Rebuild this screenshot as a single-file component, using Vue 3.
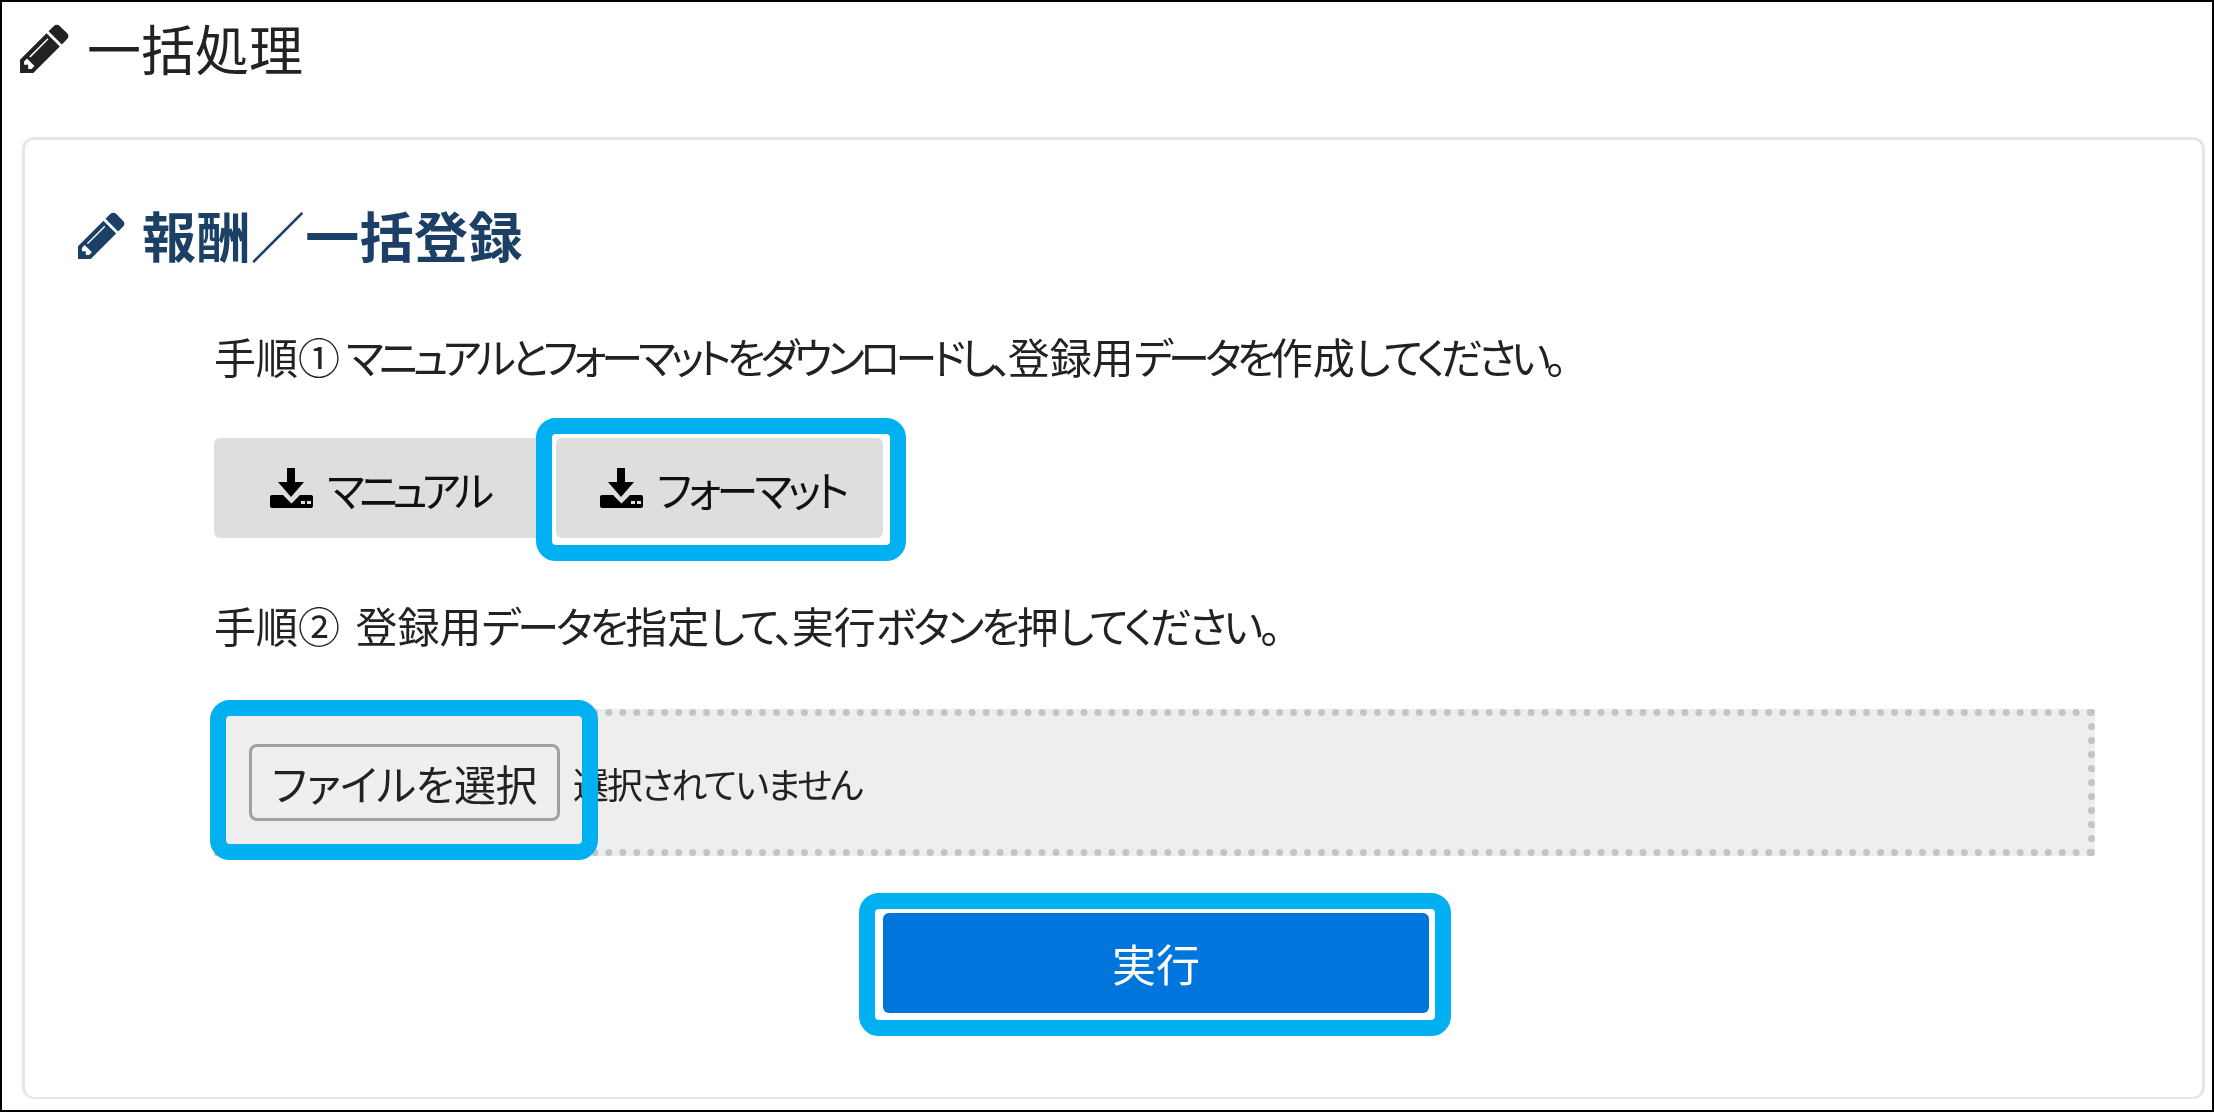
<script setup>
const pencilPath = 'M491 1536l91-91-235-235-91 91v107h128v128h107zm523-928q0-22-22-22-10 0-17 7l-542 542q-7 7-7 17 0 22 22 22 10 0 17-7l542-542q7-7 7-17zm-54-192l416 416-832 832h-416v-416zm683 96q0 53-37 90l-166 166-416-416 166-165q36-38 90-38 53 0 91 38l235 234q37 39 37 91z'
const downloadPath = 'M17 0h8v14h9L21 29 8 14h9zM2 27h11l8.500 8.500L30 27h11q2 0 2 2v9q0 2-2 2H2q-2 0-2-2v-9q0-2 2-2zM31 33h4v3h-4zM37 33h4v3h-4z'
</script>

<template>
  <div class="page">
    <h1 class="page-title">
      <svg class="pencil" viewBox="128 128 1536 1536"><path :d="pencilPath" /></svg>
      <span>一括処理</span>
    </h1>

    <section class="card">
      <h2 class="card-title">
        <svg class="pencil" viewBox="128 128 1536 1536"><path :d="pencilPath" /></svg>
        <span>報酬／一括登録</span>
      </h2>

      <div class="card-body">
        <p class="step step-1">
          <span class="step-no">手順①</span>
          <span class="kana">マニュアルとフォーマットをダウンロードし、</span>登録用<span class="kana">データを</span>作成<span class="kana">してください。</span>
        </p>

        <div class="downloads">
          <button class="dl-btn dl-manual">
            <svg class="dl-icon" viewBox="0 0 43 40"><path :d="downloadPath" fill-rule="evenodd" /></svg>
            <span>マニュアル</span>
          </button>
          <div class="mark mark-format">
            <button class="dl-btn dl-format">
              <svg class="dl-icon" viewBox="0 0 43 40"><path :d="downloadPath" fill-rule="evenodd" /></svg>
              <span>フォーマット</span>
            </button>
          </div>
        </div>

        <p class="step step-2">
          <span class="step-no">手順②</span>
          登録用<span class="kana">データを</span>指定<span class="kana">して、</span>実行<span class="kana">ボタンを</span>押<span class="kana">してください。</span>
        </p>

        <div class="file-zone">
          <button class="file-btn">ファイルを選択</button>
          <span class="file-name">選択されていません</span>
          <div class="file-mark"></div>
        </div>

        <div class="mark mark-run">
          <button class="run-btn">実行</button>
        </div>
      </div>
    </section>
  </div>
</template>

<style>
html, body {
  background: #fff;
}
</style>

<style scoped>
.page {
  box-sizing: border-box;
  width: 2214px;
  height: 1112px;
  border: 2px solid #000;
  background: #fff;
  color: #222;
  font-family: "Noto Sans CJK JP", "Noto Sans", sans-serif;
  font-feature-settings: "palt";
  filter: blur(0.6px);
}

button {
  font-family: inherit;
  font-feature-settings: inherit;
  cursor: pointer;
}

.pencil {
  fill: currentColor;
  flex-shrink: 0;
}

.page-title {
  display: flex;
  align-items: center;
  gap: 18px;
  height: 92px;
  margin: 0 0 43px;
  padding-left: 18px;
  font-size: 54px;
  font-weight: 400;
  line-height: 1;
}

.page-title .pencil {
  width: 49px;
  height: 49px;
}

.card {
  box-sizing: border-box;
  height: 962px;
  margin: 0 7px 0 20px;
  padding: 70px 107px 0 53px;
  border: 3px solid #e6e6e6;
  border-bottom-width: 2px;
  border-radius: 12px;
}

.card-title {
  display: flex;
  align-items: center;
  gap: 17px;
  height: 50px;
  margin: 0;
  color: #1c3f66;
  font-size: 54px;
  font-weight: 700;
  letter-spacing: 0.4px;
  line-height: 1;
}

.card-title .pencil {
  width: 47px;
  height: 47px;
}

.card-body {
  display: flex;
  flex-direction: column;
  margin-left: 136px;
}

.step {
  display: flex;
  margin: 0;
  font-size: 42px;
  line-height: 42px;
  white-space: pre-wrap;
}

.step {
  display: block;
  white-space: nowrap;
}

.step-no {
  margin-right: 6px;
}

.step-1 {
  margin-top: 75px;
}

.step-1 .kana {
  letter-spacing: -4.8px;
}

.step-2 {
  margin-top: 66px;
}

.step-2 .kana {
  letter-spacing: -3.1px;
}

.downloads {
  display: flex;
  margin-top: 61px;
}

.dl-btn {
  display: flex;
  align-items: center;
  gap: 14px;
  box-sizing: border-box;
  height: 100px;
  border: 0;
  border-radius: 6px;
  background: #dedede;
  color: #111;
  font-size: 42px;
}

.dl-manual {
  width: 332px;
  padding: 0 0 0 56px;
  letter-spacing: -5.5px;
}

.dl-format {
  width: 327px;
  padding: 0 0 0 44px;
  letter-spacing: -4px;
}

.dl-icon {
  width: 43px;
  height: 40px;
  fill: #000;
}

.mark {
  position: relative;
  border: 16px solid #00b0f0;
  border-radius: 20px;
  background: #fff;
}

.mark-format {
  margin: -20px -23px -23px -10px;
  padding: 4px 7px 7px 4px;
}

.file-zone {
  position: relative;
  box-sizing: border-box;
  display: flex;
  align-items: center;
  height: 147px;
  margin-top: 63px;
  padding-left: 28px;
  border: 7px dotted #c4c4c4;
  background: #eee;
}

.file-btn {
  box-sizing: border-box;
  width: 311px;
  height: 77px;
  padding: 0;
  border: 3px solid #a0a0a0;
  border-radius: 8px;
  background: #efefef;
  color: #222;
  font-size: 42px;
  letter-spacing: -0.4px;
}

.file-name {
  margin-left: 13px;
  font-size: 36px;
  letter-spacing: -2px;
}

.file-mark {
  position: absolute;
  top: -16px;
  left: -11px;
  box-sizing: border-box;
  width: 388px;
  height: 160px;
  border: 16px solid #00b0f0;
  border-radius: 20px;
}

.mark-run {
  align-self: flex-start;
  margin: 37px 0 0 645px;
  padding: 4px 6px 7px 8px;
}

.run-btn {
  display: block;
  width: 546px;
  height: 100px;
  padding: 0;
  border: 0;
  border-radius: 6px;
  background: #0076dc;
  color: #fff;
  font-size: 44px;
}
</style>
